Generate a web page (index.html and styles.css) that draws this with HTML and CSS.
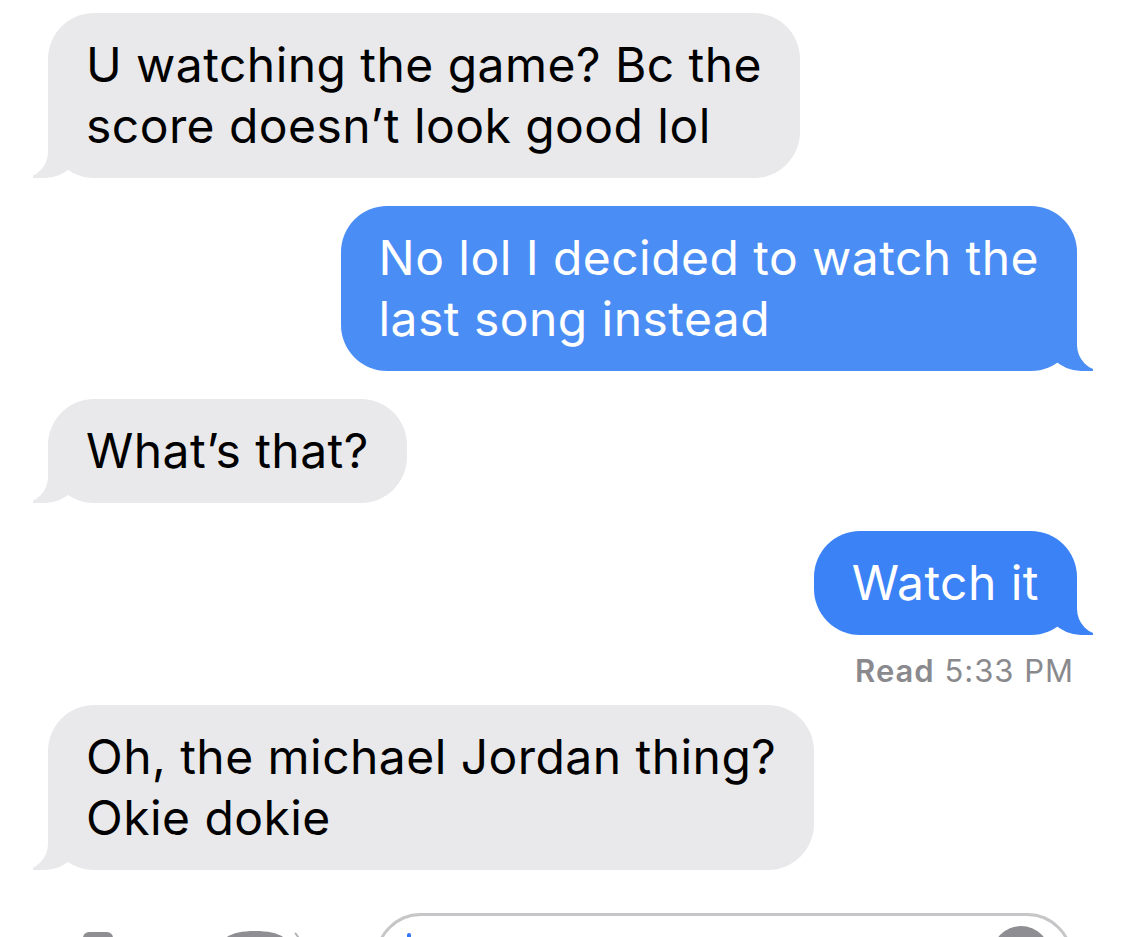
FILE: index.html
```html
<!DOCTYPE html>
<html lang="en">
  <head>
    <meta charset="UTF-8" />
    <meta name="viewport" content="width=device-width, initial-scale=1.0" />
    <title>Messages</title>
    <link rel="stylesheet" href="styles.css">
  </head>
  <body>
    <div class="thread">
      <div class="msg received">U watching the game? Bc the<br />score doesn’t look good lol</div>
      <div class="msg sent sent-top">No lol I decided to watch the<br />last song instead</div>
      <div class="msg received">What’s that?</div>
      <div class="msg sent">Watch it</div>
      <div class="read"><b>Read</b> 5:33 PM</div>
      <div class="msg received">Oh, the michael Jordan thing?<br />Okie dokie</div>
    </div>

    <div class="compose">
      <svg class="camera" width="34" height="20" viewBox="0 0 34 20">
        <rect x="2" y="0" width="30" height="20" rx="6" fill="#8e8e93" />
      </svg>
      <svg class="apps" width="92" height="20" viewBox="0 0 92 20">
        <path d="M4 20 C6 8 18 2 40 2 C62 2 74 8 76 20 Z" fill="#8e8e93" />
        <path d="M80 4 C84 8 86 13 87 20" stroke="#b4b4b8" stroke-width="2" fill="none" />
      </svg>
      <div class="field">
        <span class="cursor"></span>
        <span class="mic"></span>
      </div>
    </div>
  </body>
</html>
```

FILE: styles.css
```css
* {
  margin: 0;
  padding: 0;
  box-sizing: border-box;
}
body {
  font-family: Inter, "Noto Sans", sans-serif;
  background-color: #fff;
  height: 937px;
  overflow: hidden;
}
.thread {
  display: flex;
  flex-direction: column;
  gap: 28px;
  padding: 13px 48px 0 48px;
}
.msg {
  position: relative;
  width: fit-content;
  padding: 21px 38px 22px 38px;
  border-radius: 46px;
  font-size: 48px;
  line-height: 61px;
  letter-spacing: 0.45px;
  white-space: nowrap;
}
.received {
  background-color: #e9e9eb;
  color: #000;
  align-self: flex-start;
}
.sent {
  background-color: #3b82f6;
  color: #fff;
  align-self: flex-end;
}
.sent-top {
  background-color: #4a8df4;
}
/* bubble tails */
.msg::before,
.msg::after {
  content: "";
  position: absolute;
  bottom: 0;
}
.received::before {
  left: -15px;
  width: 50px;
  height: 44px;
  background-color: #e9e9eb;
  border-bottom-right-radius: 38px;
}
.received::after {
  left: -40px;
  width: 40px;
  height: 48px;
  background-color: #fff;
  border-bottom-right-radius: 26px;
}
.sent::before {
  right: -16px;
  width: 50px;
  height: 44px;
  background-color: inherit;
  border-bottom-left-radius: 38px;
}
.sent::after {
  right: -40px;
  width: 40px;
  height: 48px;
  background-color: #fff;
  border-bottom-left-radius: 26px;
}
.read {
  align-self: flex-end;
  margin: -10px 3px -12px 0;
  font-size: 31px;
  line-height: 36px;
  letter-spacing: 1px;
  color: #8a8a8e;
}
.read b {
  font-weight: 600;
}
.compose {
  display: flex;
  align-items: flex-start;
  margin-top: 43px;
  padding-left: 81px;
  padding-right: 52px;
}
.camera {
  margin-top: 19px;
}
.apps {
  margin-top: 16px;
  margin-left: 100px;
}
.field {
  flex: 1;
  height: 100px;
  margin-left: 68px;
  border: 3px solid #c6c6c8;
  border-radius: 46px;
  display: flex;
  align-items: flex-start;
  justify-content: space-between;
  padding: 16px 20px 0 29px;
}
.cursor {
  width: 4px;
  height: 40px;
  margin-top: 1px;
  background-color: #3478f6;
  border-radius: 2px;
}
.mic {
  width: 58px;
  height: 58px;
  margin-top: -6px;
  border-radius: 50%;
  background-color: #8e8e93;
}
```
